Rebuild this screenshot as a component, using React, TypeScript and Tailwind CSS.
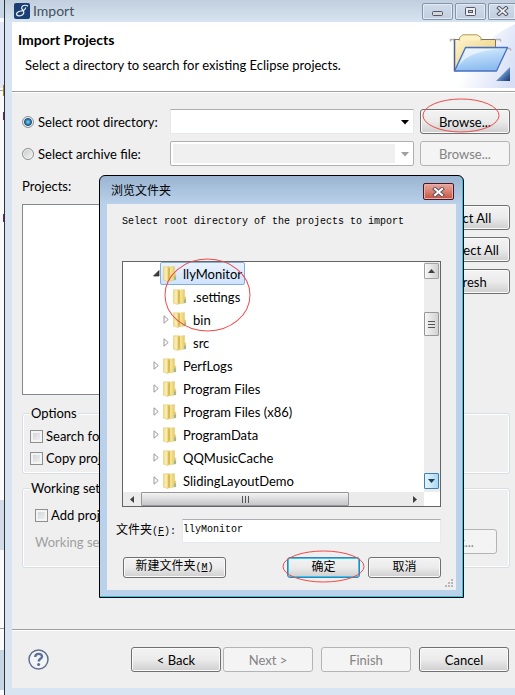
import React, { useState } from 'react';

const cjk = "font-['Liberation_Mono','Noto_Sans_CJK_SC',monospace]";

function PushButton({
  children,
  disabled = false,
  className = 'w-[90px]',
}: {
  children: React.ReactNode;
  disabled?: boolean;
  className?: string;
}) {
  return (
    <button
      type="button"
      disabled={disabled}
      className={`h-[25px] shrink-0 rounded-[3px] border text-center leading-5 ${
        disabled
          ? 'border-[#b4b4b4] bg-[#f4f4f4] text-[#838383]'
          : 'border-[#707070] bg-linear-to-b from-[#f3f3f3] from-0% via-[#ebebeb] via-50% to-[#cfcfcf] text-black shadow-[inset_0_0_0_1px_#fafafa]'
      } ${className}`}
    >
      {children}
    </button>
  );
}

function DialogButton({
  children,
  primary = false,
  className = 'w-[73px]',
}: {
  children: React.ReactNode;
  primary?: boolean;
  className?: string;
}) {
  return (
    <button
      type="button"
      className={`h-[21px] rounded-[3px] border bg-linear-to-b from-[#f3f3f3] from-0% via-[#ebebeb] via-50% to-[#cfcfcf] text-xs leading-4 text-black ${
        primary ? 'border-[#3c7fb1] shadow-[inset_0_0_0_1px_#33c8ef]' : 'border-[#707070] shadow-[inset_0_0_0_1px_#fafafa]'
      } ${className}`}
    >
      {children}
    </button>
  );
}

function Ellipse({ className }: { className: string }) {
  return (
    <svg className={`pointer-events-none absolute overflow-visible ${className}`} viewBox="0 0 100 100" preserveAspectRatio="none" aria-hidden="true">
      <ellipse cx="50" cy="50" rx="50" ry="50" fill="none" stroke="#f04a4a" strokeWidth="1" vectorEffect="non-scaling-stroke" />
    </svg>
  );
}

function FolderIcon() {
  return (
    <svg className="h-4 w-[14px] shrink-0" viewBox="0 0 14 16" aria-hidden="true">
      <defs>
        <linearGradient id="leaf" x1="0" x2="1">
          <stop offset="0" stopColor="#d8b850" />
          <stop offset="0.300" stopColor="#f6e79c" />
          <stop offset="1" stopColor="#e0c050" />
        </linearGradient>
        <linearGradient id="cover" x1="0" x2="1">
          <stop offset="0" stopColor="#f0dc8c" />
          <stop offset="0.500" stopColor="#faefb8" />
          <stop offset="1" stopColor="#e2c45c" />
        </linearGradient>
      </defs>
      <path d="M5.500 1.200 11.500.6v7l1.300.7v5.500L7 15z" fill="url(#leaf)" stroke="#e2cb78" strokeWidth="0.500" />
      <path d="M.5.8h5.500v12l-1 2.700L.5 14.200z" fill="url(#cover)" stroke="#dcc266" strokeWidth="0.500" />
      <path d="M5.400 2.500 6.800 1.600v12.600l-1.400 1.300z" fill="#d6b347" />
      <path d="M12 10.500V14" stroke="#4aa3d8" strokeWidth="1" />
    </svg>
  );
}

function Branch({ open }: { open?: boolean }) {
  return open ? (
    <svg className="size-[7px] shrink-0" viewBox="0 0 7 7" aria-hidden="true">
      <path d="M6 .5v5.500H.5z" fill="#404040" stroke="#222" strokeWidth="0.700" />
    </svg>
  ) : (
    <svg className="h-[9px] w-[7px] shrink-0" viewBox="0 0 7 9" aria-hidden="true">
      <path d="M1 .8v7.400L5.200 4.500z" fill="#fff" stroke="#989898" />
    </svg>
  );
}

type Node = { name: string; child?: boolean; state: 'open' | 'closed' | 'leaf' };
const nodes: Node[] = [
  { name: 'llyMonitor', state: 'open' },
  { name: '.settings', child: true, state: 'leaf' },
  { name: 'bin', child: true, state: 'closed' },
  { name: 'src', child: true, state: 'closed' },
  { name: 'PerfLogs', state: 'closed' },
  { name: 'Program Files', state: 'closed' },
  { name: 'Program Files (x86)', state: 'closed' },
  { name: 'ProgramData', state: 'closed' },
  { name: 'QQMusicCache', state: 'closed' },
  { name: 'SlidingLayoutDemo', state: 'closed' },
];

function Tree() {
  return (
    <div className="border border-[#646464] bg-white">
      <div className="flex">
        <ul role="tree" aria-label="Folders" className="relative min-w-0 flex-1">
          {nodes.map((n) => (
            <li
              key={n.name}
              role="treeitem"
              aria-selected={n.state === 'open'}
              className={`flex h-[23px] items-center ${n.child ? 'pl-10' : 'pl-[30px]'}`}
            >
              <span className="flex w-[7px] shrink-0">{n.state !== 'leaf' && <Branch open={n.state === 'open'} />}</span>
              <span
                className={`flex h-[23px] items-center gap-[6px] rounded-[2px] border px-[2px] ${
                  n.state === 'open' ? 'border-[#84acdd] bg-linear-to-b from-[#eaf3fe] to-[#cfe3fd]' : 'border-transparent'
                }`}
              >
                <FolderIcon />
                <span className="leading-5 whitespace-nowrap">{n.name}</span>
              </span>
            </li>
          ))}
          <Ellipse className="top-[-3px] left-[42px] h-[72px] w-[85px]" />
        </ul>
        <div className="flex w-4 flex-col items-start bg-[#ededed] pt-px pb-[3px]">
          <button type="button" aria-label="Scroll up" className="flex h-4 w-[15px] items-center justify-center rounded-[1px] border border-[#a2a2a2] bg-linear-to-r from-[#f6f6f6] to-[#d2d2d2]">
            <svg width="7" height="4" viewBox="0 0 7 4"><path d="M0 4 3.500 0 7 4z" fill="#404040" /></svg>
          </button>
          <div className="mt-[33px] flex h-6 w-[15px] flex-col items-center justify-center gap-[2px] rounded-[1px] border border-[#979797] bg-linear-to-r from-[#f6f6f6] to-[#d2d2d2]">
            <span className="h-px w-[7px] bg-[#555]" />
            <span className="h-px w-[7px] bg-[#555]" />
            <span className="h-px w-[7px] bg-[#555]" />
          </div>
          <button type="button" aria-label="Scroll down" className="mt-auto flex h-4 w-[15px] items-center justify-center rounded-[1px] border border-[#3c7fb1] bg-linear-to-r from-[#e5f4fc] to-[#a9d9f2]">
            <svg width="7" height="4" viewBox="0 0 7 4"><path d="M0 0h7L3.500 4z" fill="#1d3f55" /></svg>
          </button>
        </div>
      </div>
      <div className="mr-4 flex h-[14px] items-center bg-[#ebebeb]">
        <button type="button" aria-label="Scroll left" className="flex w-[18px] justify-center">
          <svg width="4" height="7" viewBox="0 0 4 7"><path d="M4 0v7L0 3.500z" fill="#404040" /></svg>
        </button>
        <div className="flex h-[14px] w-[208px] items-center justify-center gap-[2px] rounded-[1px] border border-[#979797] bg-linear-to-b from-[#f3f3f3] to-[#c6c6ca]">
          <span className="h-[7px] w-px bg-[#555]" />
          <span className="h-[7px] w-px bg-[#555]" />
          <span className="h-[7px] w-px bg-[#555]" />
        </div>
        <button type="button" aria-label="Scroll right" className="mr-[7px] ml-auto">
          <svg width="4" height="7" viewBox="0 0 4 7"><path d="M0 0v7l4-3.500z" fill="#404040" /></svg>
        </button>
      </div>
    </div>
  );
}

function FolderDialog() {
  const [name, setName] = useState('llyMonitor');
  return (
    <section
      role="dialog"
      aria-label="浏览文件夹"
      className="absolute top-[175px] left-[99px] w-[365px] rounded-t-[6px] border border-black bg-[#bad1ea] bg-linear-to-b from-[#9ab4d1] to-[#b9d1ea] to-[28px] px-[7px] pb-[7px] text-black shadow-[inset_-1px_-1px_0_#25c8e8]"
    >
      <header className="flex h-7 items-center pl-1">
        <h2 className={`flex-1 pt-[4px] text-xs leading-4 ${cjk}`}>浏览文件夹</h2>
        <button type="button" aria-label="Close" className="mt-[3px] mr-[2px] flex h-[17px] w-[31px] items-center justify-center rounded-[2px] border border-[#4b1520] bg-linear-to-b from-[#e9a79c] from-0% via-[#d98373] via-48% to-[#c4523f] shadow-[inset_0_0_0_1px_#eab0a7]">
          <svg width="13" height="10" viewBox="0 0 13 10">
            <path d="m3 2 7 6m0-6-7 6" stroke="#5a5566" strokeWidth="4" strokeLinecap="square" />
            <path d="m3 2 7 6m0-6-7 6" stroke="#fff" strokeWidth="2" strokeLinecap="square" />
          </svg>
        </button>
      </header>
      <div className="relative bg-[#efefef] px-[15px] pt-[10px] pb-3">
        <p className={`mb-8 text-[10px] leading-[15px] ${cjk}`}>Select root directory of the projects to import</p>
        <Tree />
        <div className={`mt-3 -ml-[6px] flex items-center text-xs ${cjk}`}>
          <label htmlFor="folder" className="w-[66px] leading-4 whitespace-nowrap">
            文件夹<span className="text-[10px]">(<u>F</u>):</span>
          </label>
          <input
            id="folder"
            value={name}
            onChange={(e) => setName(e.target.value)}
            className="h-6 min-w-0 flex-1 border border-[#e3e9ef] border-t-[#abadb3] bg-white pb-1 text-[10px] outline-none"
          />
        </div>
        <div className={`mt-[14px] flex items-center gap-2 pl-px ${cjk}`}>
          <DialogButton className="mr-auto w-[103px]">
            新建文件夹<span className="text-[10px]">(<u>M</u>)</span>
          </DialogButton>
          <div className="relative flex">
            <DialogButton primary>确定</DialogButton>
            <Ellipse className="top-[-6px] left-[-4px] h-[31px] w-[81px]" />
          </div>
          <DialogButton>取消</DialogButton>
        </div>
        <svg className="absolute right-[2px] bottom-[2px]" width="9" height="9" viewBox="0 0 9 9" fill="#b8b8b8" aria-hidden="true">
          <path d="M6 0h2v2H6zM3 3h2v2H3zM6 3h2v2H6zM0 6h2v2H0zM3 6h2v2H3zM6 6h2v2H6z" />
        </svg>
      </div>
    </section>
  );
}

function TitleBar() {
  const box = 'flex h-[17px] items-center justify-center border border-[#8593a8] bg-linear-to-b from-[#cfdbe9] to-[#c0cfe0] shadow-[inset_0_0_0_1px_#e2eaf3]';
  return (
    <header className="flex h-[22px] items-center bg-linear-to-b from-[#c1cedd] to-[#d7e4f1] pl-[9px]">
      <svg className="size-4" viewBox="0 0 16 16" aria-hidden="true">
        <rect width="16" height="16" rx="2" fill="#1b3f73" />
        <path
          d="M14 3.200C12.500 1.800 9 1.800 7.800 4 6.500 6.500 10.500 7.500 9.800 10c-.8 2.800-5.500 3.800-7 2C1.500 10.300 4 8.300 7 8c3-.3 4.800-1.800 4.600-3.600"
          fill="none"
          stroke="#eaf1fa"
          strokeWidth="1.200"
        />
      </svg>
      <h1 className="flex-1 pl-[3px] text-sm leading-5 text-[#44525f]">Import</h1>
      <div className="flex gap-[2px]">
        <button type="button" aria-label="Minimize" className={`${box} w-[31px] rounded-[2px]`}>
          <svg width="11" height="5" viewBox="0 0 11 5" className="mt-1"><rect x=".5" y=".5" width="10" height="4" rx="1" fill="#d6d6d6" stroke="#535666" /></svg>
        </button>
        <button type="button" aria-label="Maximize" className={`${box} w-[31px] rounded-[2px]`}>
          <svg width="11" height="9" viewBox="0 0 11 9"><rect x=".5" y=".5" width="10" height="8" rx="1" fill="#eee" stroke="#535666" /><rect x="3.500" y="3.500" width="4" height="2" fill="#c3d0df" stroke="#535666" /></svg>
        </button>
        <button type="button" aria-label="Close window" className={`${box} w-[27px] rounded-l-[2px] border-r-0`}>
          <svg width="13" height="10" viewBox="0 0 13 10">
            <path d="m3 2 7 6m0-6-7 6" stroke="#535666" strokeWidth="3.800" strokeLinecap="square" />
            <path d="m3 2 7 6m0-6-7 6" stroke="#eee" strokeWidth="1.800" strokeLinecap="square" />
          </svg>
        </button>
      </div>
    </header>
  );
}

function BannerArt() {
  return (
    <svg className="h-[66px] w-[68px] shrink-0" viewBox="0 0 68 66" aria-hidden="true">
      <defs>
        <linearGradient id="glow" x1="0" y1="0.300" x2="1" y2="0.700">
          <stop offset="0.300" stopColor="#fff" />
          <stop offset="1" stopColor="#d6dff6" />
        </linearGradient>
        <linearGradient id="manila" x1="0" y1="0" x2="1" y2="1">
          <stop offset="0" stopColor="#fdf3cc" />
          <stop offset="1" stopColor="#ecc768" />
        </linearGradient>
        <linearGradient id="front" x1="0" y1="0" x2="0.300" y2="1">
          <stop offset="0" stopColor="#e4f1fd" />
          <stop offset="0.500" stopColor="#b5d7f8" />
          <stop offset="1" stopColor="#8dbdf0" />
        </linearGradient>
        <linearGradient id="corner" x1="0" y1="0" x2="1" y2="1">
          <stop offset="0.300" stopColor="#9db9da" />
          <stop offset="0.700" stopColor="#3f69a6" />
          <stop offset="1" stopColor="#17356a" />
        </linearGradient>
      </defs>
      <path d="M68 2C48 12 16 34 4 66h64z" fill="url(#glow)" />
      <path d="M3.500 19.500v-2H8M49 17.500h4l1 2M14.500 29v-1.500H18M60 26.500h3l1 2" fill="none" stroke="#b4b4b4" strokeWidth="1.500" />
      <path d="M7.500 49V17.500h41V45z" fill="url(#manila)" stroke="#7c7466" />
      <path d="M7.500 49V17.500" stroke="#505c98" strokeWidth="1.500" />
      <path d="M12.500 18.500v-3L16 12.800h14l4 2.700v3" fill="#fbf0c8" stroke="#b79b4c" />
      <path d="M7.500 49 18.500 25.500h42L49.500 49z" fill="url(#front)" stroke="#4a6fc0" strokeWidth="1.300" strokeLinejoin="round" />
      <path d="M10.500 45.500 19.300 27H52C32 29 18 33 10.500 45.500z" fill="#f2f8fe" opacity=".7" />
      <path d="M63 45v14H49z" fill="url(#corner)" />
    </svg>
  );
}

function Combo({ id, label, disabled = false }: { id: string; label: string; disabled?: boolean }) {
  return (
    <div
      className={`relative h-[25px] min-w-0 flex-1 border ${
        disabled ? 'rounded-[2px] border-[#b0b0b0] bg-white p-[2px] pr-[18px]' : 'border-[#e3e9ef] border-t-[#abadb3] bg-white'
      }`}
    >
      <select id={id} aria-label={label} disabled={disabled} className={`block size-full appearance-none outline-none ${disabled ? 'bg-[#f0f0f0]' : 'bg-white'}`} />
      <svg className="pointer-events-none absolute top-[10px] right-1" width="8" height="5" viewBox="0 0 8 5" aria-hidden="true">
        <path d="M0 0h8L4 4.500z" fill={disabled ? '#a0a0a0' : '#000'} />
      </svg>
    </div>
  );
}

function Radio({ label, checked, onPick }: { label: string; checked: boolean; onPick: () => void }) {
  return (
    <label className="flex w-[148px] shrink-0 items-center gap-1 leading-5 whitespace-nowrap">
      <input
        type="radio"
        name="source"
        checked={checked}
        onChange={onPick}
        className={`size-3 shrink-0 appearance-none rounded-full border border-[#8e8f8f] shadow-[inset_0_0_0_1px_#f4f4f4] ${
          checked ? 'bg-radial from-[#5cc4ee] from-10% via-[#1c4f80] via-50% to-[#e4e8ec] to-70%' : 'bg-linear-to-br from-[#c4c8cc] to-[#f6f6f6]'
        }`}
      />
      {label}
    </label>
  );
}

function Check({ label }: { label: string }) {
  return (
    <label className="flex items-center gap-[3px] leading-[22px] whitespace-nowrap">
      <input
        type="checkbox"
        className="size-[13px] shrink-0 appearance-none border border-[#8e8f8f] bg-linear-to-br from-[#cbcfd5] to-[#f6f6f6] shadow-[inset_0_0_0_2px_#f4f4f4]"
      />
      {label}
    </label>
  );
}

function DesktopSliver() {
  return (
    <svg className="h-screen w-1 shrink-0" viewBox="0 0 4 695" preserveAspectRatio="none" aria-hidden="true">
      <path d="M0 0h4v695H0z" fill="#fafafa" />
      <path d="M0 0h4v18H0z" fill="#c9d6e6" />
      <path d="M0 22h4v66H0z" fill="#e1e7f7" />
      <path d="M0 90h4v1H0zM0 628h4v1H0z" fill="#a0a0a0" />
      <path d="M3 85h1v11H3z" fill="#a8862c" />
      <path d="M3 112h1v8H3zM3 214h1v8H3z" fill="#7a1f5c" />
      <path d="M0 500h4v50H0z" fill="#d3dce6" />
      <path d="M0 650h4v40H0z" fill="#c6d4e4" />
    </svg>
  );
}

export default function App() {
  const [source, setSource] = useState('root');
  const group = 'rounded-[3px] border border-[#d5dfe5] shadow-[inset_0_0_0_1px_#fff]';
  return (
    <div className="relative flex min-h-screen overflow-hidden bg-[#fafafa] font-['Lato','Noto_Sans_CJK_SC',sans-serif] text-[13px] text-black">
      <DesktopSliver />
      <main className="flex min-w-0 flex-1 flex-col border-l border-[#2e3338] bg-[#d8e4f1]">
        <TitleBar />
        <div className="mb-[7px] ml-[7px] flex flex-1 flex-col bg-[#efefef]">
          <section className="flex h-[70px] justify-between border-b border-[#a0a0a0] bg-white pl-[6px]">
            <div className="pt-2">
              <h2 className="text-sm leading-5 font-bold">Import Projects</h2>
              <p className="mt-[5px] pl-[7px] leading-5 whitespace-nowrap">Select a directory to search for existing Eclipse projects.</p>
            </div>
            <BannerArt />
          </section>

          <div className="flex flex-1 flex-col border-t border-white pt-4 pr-[5px] pl-[10px]">
            <div className="flex flex-col gap-[7px]">
              <div className="flex items-center">
                <Radio label="Select root directory:" checked={source === 'root'} onPick={() => setSource('root')} />
                <Combo id="root" label="Root directory" />
                <div className="relative ml-[6px] flex">
                  <PushButton>Browse...</PushButton>
                  <Ellipse className="top-[-10px] left-[3px] h-[33px] w-[76px]" />
                </div>
              </div>
              <div className="flex items-center">
                <Radio label="Select archive file:" checked={source === 'archive'} onPick={() => setSource('archive')} />
                <Combo id="archive" label="Archive file" disabled />
                <div className="ml-[6px] flex">
                  <PushButton disabled>Browse...</PushButton>
                </div>
              </div>
            </div>

            <h3 className="mt-[10px] leading-5">Projects:</h3>
            <div className="mt-2 flex gap-[6px]">
              <div role="listbox" aria-label="Projects" className="h-[191px] flex-1 border border-[#828790] bg-white" />
              <div className="flex flex-col gap-[7px] pt-px">
                <PushButton>Select All</PushButton>
                <PushButton>Deselect All</PushButton>
                <PushButton>Refresh</PushButton>
              </div>
            </div>

            <section className={`mt-[18px] h-[61px] pl-[7px] ${group}`}>
              <h3 className="-mt-[11px] w-fit bg-[#efefef] px-px leading-5">Options</h3>
              <div className="mt-[2px]">
                <Check label="Search for nested" />
                <Check label="Copy projects" />
              </div>
            </section>

            <section className={`mt-[14px] h-20 pl-[7px] ${group}`}>
              <h3 className="-mt-[11px] w-fit bg-[#efefef] px-px leading-5">Working sets</h3>
              <div className="mt-[6px] pr-3 pl-[5px]">
                <Check label="Add project" />
                <div className="mt-[3px] flex items-center justify-between">
                  <span className="leading-5 text-[#a0a0a0]">Working sets:</span>
                  <PushButton disabled>Select...</PushButton>
                </div>
              </div>
            </section>
          </div>

          <footer className="border-t border-[#a0a0a0]">
            <div className="flex items-center border-t border-white py-4 pr-[6px] pl-4">
              <button type="button" aria-label="Help" className="mr-auto flex">
                <svg width="21" height="21" viewBox="0 0 21 21" aria-hidden="true">
                  <circle cx="10.500" cy="10.500" r="9.500" fill="#f3f4f7" stroke="#61718f" strokeWidth="1.500" />
                  <path d="M7.200 8c0-4 6.800-4.200 6.800-.6 0 2.400-3.300 2.400-3.300 5" fill="none" stroke="#5c6f94" strokeWidth="2.400" />
                  <circle cx="10.600" cy="15.500" r="1.500" fill="#5c6f94" />
                </svg>
              </button>
              <div className="flex gap-2">
                <div className="flex gap-[2px]">
                  <PushButton>&lt; Back</PushButton>
                  <PushButton disabled>Next &gt;</PushButton>
                </div>
                <PushButton disabled>Finish</PushButton>
                <PushButton>Cancel</PushButton>
              </div>
            </div>
          </footer>
        </div>
      </main>
      <FolderDialog />
    </div>
  );
}
